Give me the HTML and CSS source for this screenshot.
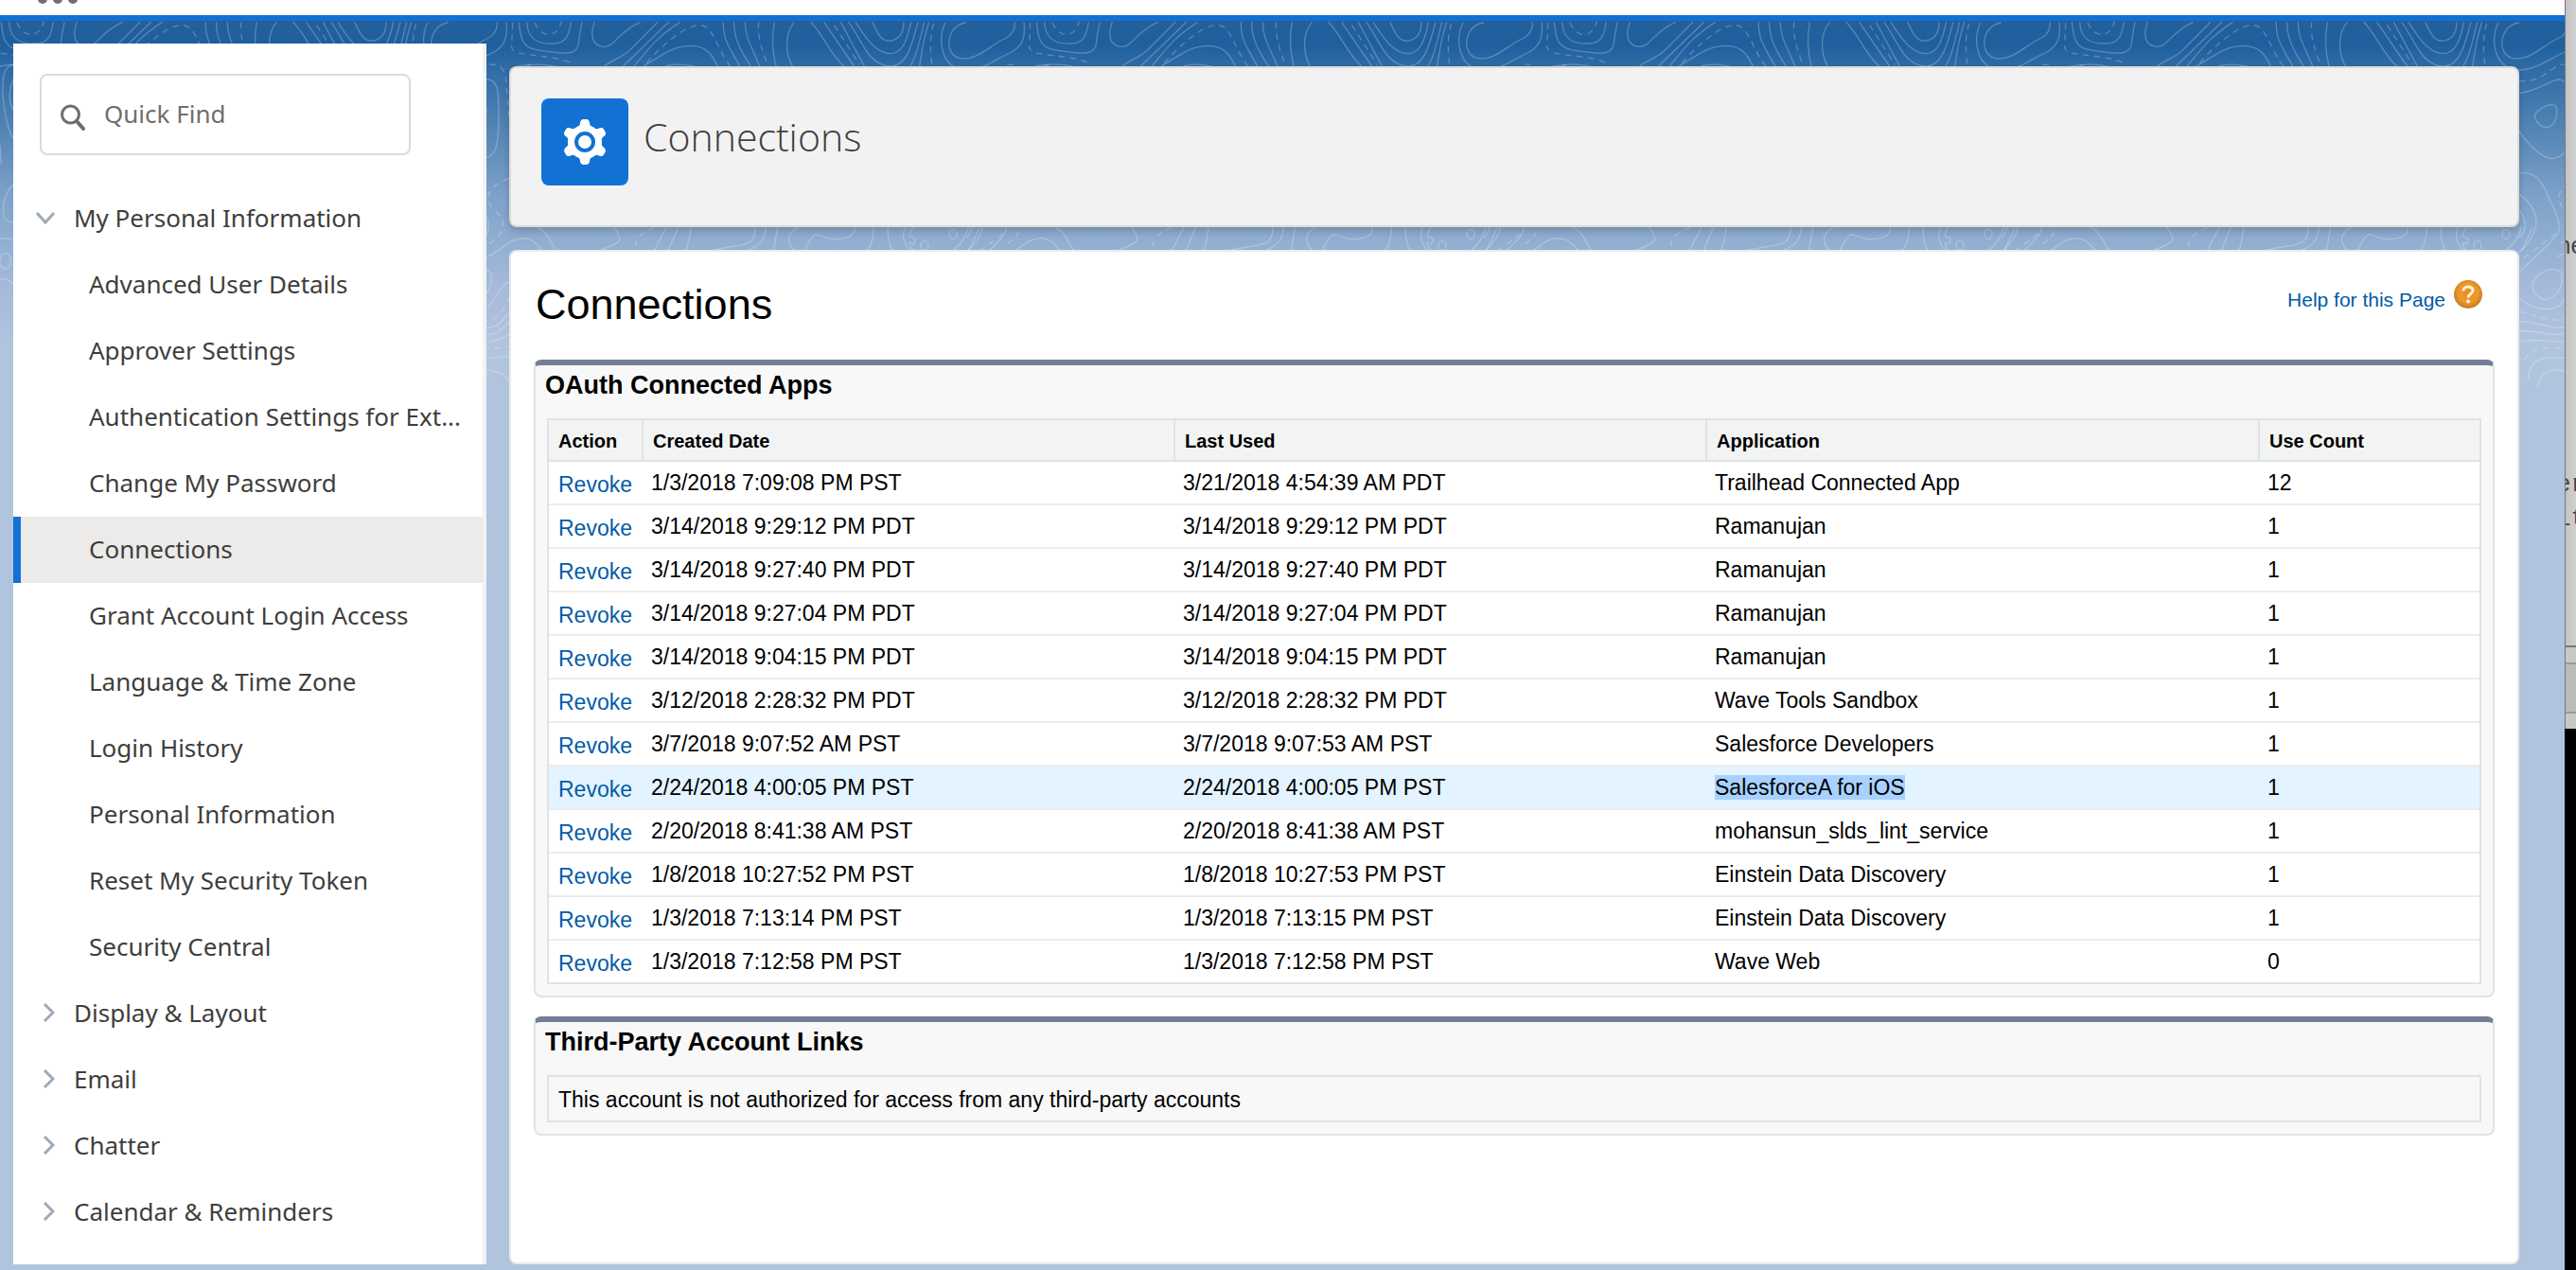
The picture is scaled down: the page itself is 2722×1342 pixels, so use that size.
FILE: index.html
```html
<!DOCTYPE html>
<html lang="en">
<head>
<meta charset="utf-8">
<title>Connections</title>
<link rel="stylesheet" href="styles.css">
</head>
<body>
<div class="window">
  <header class="topbar">
    <button class="topbar-more" type="button" aria-label="More">
      <svg width="48" height="16" viewBox="0 0 48 16"><g fill="#706e6b"><circle cx="8" cy="-1" r="5"/><circle cx="24" cy="-1" r="5"/><circle cx="40" cy="-1" r="5"/></g></svg>
    </button>
  </header>
  <div class="stage">
    <svg class="contours" aria-hidden="true">
      <defs>
        <pattern id="contour" x="500" y="-22" width="547" height="500" viewBox="0 0 1641 1500" patternUnits="userSpaceOnUse">
          <g id="tile">
            <path d="M1562 72C1500 80 1490 170 1540 184C1600 195 1640 140 1690 120C1712 108 1718 90 1717 70M1497 72C1470 120 1480 222 1567 222C1620 220 1660 185 1707 165C1740 145 1752 120 1746 70M1562 295C1620 292 1655 255 1690 252C1720 255 1722 290 1722 370C1722 470 1710 495 1680 500C1650 515 1600 470 1562 415M1612 365C1630 335 1680 320 1682 345C1685 390 1660 405 1648 404C1625 400 1612 380 1612 365ZM1562 548C1620 548 1630 570 1650 610C1680 680 1700 710 1685 740C1650 790 1580 840 1562 865M1562 615C1640 670 1630 740 1562 800M1562 665C1590 700 1585 735 1562 755M1605 900C1615 860 1680 840 1697 865C1705 910 1680 945 1650 950C1620 945 1602 925 1605 900ZM1562 945C1620 990 1660 985 1690 970C1715 950 1725 900 1760 890M1562 1020C1620 1015 1650 1045 1700 1038C1730 1030 1740 1005 1755 990M1562 1050C1620 1045 1650 1065 1700 1060C1730 1050 1740 1035 1755 1020M1562 1085C1600 1070 1650 1085 1700 1083C1730 1075 1745 1065 1755 1060M1592 1200C1595 1135 1640 1130 1700 1135L1755 1130M1620 1230C1630 1170 1670 1165 1720 1180C1740 1185 1750 1200 1755 1210"/>
            <path d="M145 70C150 120 155 150 200 158C300 175 335 175 335 130C338 100 342 90 345 70M170 70C172 120 200 140 250 138C300 140 305 100 310 70M115 220C150 200 240 200 270 215M385 70C370 110 375 145 415 148C450 148 460 100 530 70M585 70L500 155C480 180 440 190 415 210M620 70L475 210M655 70C580 120 560 150 510 210M540 210C620 160 640 145 695 145C745 148 760 180 775 210M610 210C640 200 670 205 700 210M793 70C790 130 820 160 845 210M827 70C825 120 850 165 880 210M862 70C860 120 890 160 908 210M955 70C945 120 950 170 960 210M1018 70C985 110 990 170 1012 210M1070 70C1110 110 1130 170 1175 210M1112 70L1208 210M1165 70L1240 210M1190 70C1230 120 1250 210 1325 210C1380 210 1395 120 1410 70M1212 70C1250 130 1280 170 1325 170C1370 168 1380 100 1388 70M1265 70C1280 100 1290 130 1320 130C1360 125 1365 90 1365 70M1430 70C1415 130 1405 180 1385 210M1445 70C1425 130 1420 180 1415 210"/>
            <path d="M42 815C100 790 110 755 160 755C190 758 205 775 220 795M200 718C230 730 245 765 262 795M445 718C480 770 470 765 400 795M612 720L574 795M650 720L618 795M690 720C688 750 680 775 675 795M894 720C895 790 850 770 750 795M928 720C925 770 900 780 875 792M965 720L952 795M1030 720C980 750 1005 780 1020 795M1050 795C1090 710 1090 755 1140 758C1200 760 1210 740 1210 720M1270 720C1270 760 1260 780 1250 795M1315 720C1312 750 1320 780 1330 795M1370 720C1355 750 1370 780 1385 795M1395 720C1360 780 1420 730 1395 775C1370 755 1390 795 1400 795M1570 720C1560 760 1540 780 1520 795M1605 720C1590 760 1580 775 1570 795"/>
            <path d="M184 205C150 210 148 250 150 300C155 370 170 420 184 440M184 250C170 280 165 320 184 350M141 460L145 520M184 585C155 610 145 660 155 690C165 705 175 705 184 705M141 885C160 880 170 890 184 900"/>
            <ellipse cx="1521" cy="743" rx="12" ry="15"/><ellipse cx="1431" cy="778" rx="12" ry="15"/><ellipse cx="158" cy="828" rx="18" ry="25"/>
            <path stroke-dasharray="20 16" d="M195 72C215 120 265 125 280 68M125 72L122 150C125 185 250 165 320 205M550 200C600 140 680 75 720 80C760 80 770 150 815 210M905 70C900 120 920 170 935 210M1145 80L1225 205M1460 75C1445 120 1450 170 1455 210M1562 257C1620 262 1660 225 1683 208C1721 195 1746 215 1746 270L1754 370M113 565C50 590 30 625 65 665C110 700 105 740 42 780M575 722C530 735 515 760 514 780M1679 741L1562 830M1562 988C1610 995 1650 1020 1700 1013C1730 1000 1745 960 1758 945M1580 1140C1600 1095 1650 1105 1700 1105L1755 1098"/>
          </g>
          <use href="#tile" x="-1641"/>
        </pattern>
      </defs>
      <rect width="100%" height="100%" fill="url(#contour)" stroke="none"/>
    </svg>

    <nav class="sidebar" aria-label="Setup">
      <label class="search">
        <svg width="26" height="28" viewBox="0 0 26 28" aria-hidden="true"><circle cx="10.5" cy="11" r="9" fill="none" stroke="#706e6b" stroke-width="3"/><path d="M17 18L24 26" stroke="#706e6b" stroke-width="4" stroke-linecap="round"/></svg>
        <input type="search" placeholder="Quick Find" aria-label="Quick Find">
      </label>
      <button class="node" type="button" aria-expanded="true"><svg class="chev" viewBox="0 0 20 20"><path d="M1 5L10 15L19 5"/></svg>My Personal Information</button>
      <ul class="leaves">
        <li><a href="#">Advanced User Details</a></li>
        <li><a href="#">Approver Settings</a></li>
        <li><a href="#">Authentication Settings for Ext...</a></li>
        <li><a href="#">Change My Password</a></li>
        <li><a href="#" class="current" aria-current="page">Connections</a></li>
        <li><a href="#">Grant Account Login Access</a></li>
        <li><a href="#">Language &amp; Time Zone</a></li>
        <li><a href="#">Login History</a></li>
        <li><a href="#">Personal Information</a></li>
        <li><a href="#">Reset My Security Token</a></li>
        <li><a href="#">Security Central</a></li>
      </ul>
      <button class="node" type="button" aria-expanded="false"><svg class="chev" viewBox="0 0 20 20"><path d="M9 1L18 10L9 19"/></svg>Display &amp; Layout</button>
      <button class="node" type="button" aria-expanded="false"><svg class="chev" viewBox="0 0 20 20"><path d="M9 1L18 10L9 19"/></svg>Email</button>
      <button class="node" type="button" aria-expanded="false"><svg class="chev" viewBox="0 0 20 20"><path d="M9 1L18 10L9 19"/></svg>Chatter</button>
      <button class="node" type="button" aria-expanded="false"><svg class="chev" viewBox="0 0 20 20"><path d="M9 1L18 10L9 19"/></svg>Calendar &amp; Reminders</button>
    </nav>

    <main class="main">
      <section class="page-header">
        <span class="page-icon">
          <svg width="92" height="92" viewBox="-46 -46 92 92" aria-hidden="true">
            <g fill="#fff">
              <circle r="18"/>
              <path id="tooth" d="M-8-15Q-5-17-5-21Q-4-24-2-24H2Q4-24 5-21Q5-17 8-15Z"/>
              <use href="#tooth" transform="rotate(60)"/><use href="#tooth" transform="rotate(120)"/><use href="#tooth" transform="rotate(180)"/><use href="#tooth" transform="rotate(240)"/><use href="#tooth" transform="rotate(300)"/>
            </g>
            <circle r="9" fill="none" stroke="#1272d3" stroke-width="4"/>
          </svg>
        </span>
        <h1>Connections</h1>
      </section>

      <section class="content">
        <div class="content-head">
          <h2>Connections</h2>
          <a class="help" href="#">Help for this Page
            <svg width="32" height="32" viewBox="0 0 32 32" aria-hidden="true">
              <defs><radialGradient id="amber" cx="50%" cy="45%" r="55%"><stop offset="0" stop-color="#ec8a1c"/><stop offset=".6" stop-color="#ee9a2c"/><stop offset="1" stop-color="#c07a20"/></radialGradient></defs>
              <circle cx="16" cy="16" r="15" fill="url(#amber)"/>
              <path d="M11 12.500C11 6.500 21 6.500 21 12C21 15.500 16 15.500 16 19.500" fill="none" stroke="#fff3dc" stroke-width="3"/>
              <circle cx="16" cy="23.500" r="2" fill="#fff3dc"/>
            </svg>
          </a>
        </div>

        <section class="panel">
          <h3>OAuth Connected Apps</h3>
          <table>
            <colgroup><col class="c-action"><col class="c-date"><col class="c-date"><col class="c-app"><col></colgroup>
            <thead><tr><th scope="col">Action</th><th scope="col">Created Date</th><th scope="col">Last Used</th><th scope="col">Application</th><th scope="col">Use Count</th></tr></thead>
            <tbody>
              <tr><td><a href="#">Revoke</a></td><td>1/3/2018 7:09:08 PM PST</td><td>3/21/2018 4:54:39 AM PDT</td><td>Trailhead Connected App</td><td>12</td></tr>
              <tr><td><a href="#">Revoke</a></td><td>3/14/2018 9:29:12 PM PDT</td><td>3/14/2018 9:29:12 PM PDT</td><td>Ramanujan</td><td>1</td></tr>
              <tr><td><a href="#">Revoke</a></td><td>3/14/2018 9:27:40 PM PDT</td><td>3/14/2018 9:27:40 PM PDT</td><td>Ramanujan</td><td>1</td></tr>
              <tr><td><a href="#">Revoke</a></td><td>3/14/2018 9:27:04 PM PDT</td><td>3/14/2018 9:27:04 PM PDT</td><td>Ramanujan</td><td>1</td></tr>
              <tr><td><a href="#">Revoke</a></td><td>3/14/2018 9:04:15 PM PDT</td><td>3/14/2018 9:04:15 PM PDT</td><td>Ramanujan</td><td>1</td></tr>
              <tr><td><a href="#">Revoke</a></td><td>3/12/2018 2:28:32 PM PDT</td><td>3/12/2018 2:28:32 PM PDT</td><td>Wave Tools Sandbox</td><td>1</td></tr>
              <tr><td><a href="#">Revoke</a></td><td>3/7/2018 9:07:52 AM PST</td><td>3/7/2018 9:07:53 AM PST</td><td>Salesforce Developers</td><td>1</td></tr>
              <tr class="hovered"><td><a href="#">Revoke</a></td><td>2/24/2018 4:00:05 PM PST</td><td>2/24/2018 4:00:05 PM PST</td><td><span class="selected">SalesforceA for iOS</span></td><td>1</td></tr>
              <tr><td><a href="#">Revoke</a></td><td>2/20/2018 8:41:38 AM PST</td><td>2/20/2018 8:41:38 AM PST</td><td>mohansun_slds_lint_service</td><td>1</td></tr>
              <tr><td><a href="#">Revoke</a></td><td>1/8/2018 10:27:52 PM PST</td><td>1/8/2018 10:27:53 PM PST</td><td>Einstein Data Discovery</td><td>1</td></tr>
              <tr><td><a href="#">Revoke</a></td><td>1/3/2018 7:13:14 PM PST</td><td>1/3/2018 7:13:15 PM PST</td><td>Einstein Data Discovery</td><td>1</td></tr>
              <tr><td><a href="#">Revoke</a></td><td>1/3/2018 7:12:58 PM PST</td><td>1/3/2018 7:12:58 PM PST</td><td>Wave Web</td><td>0</td></tr>
            </tbody>
          </table>
        </section>

        <section class="panel">
          <h3>Third-Party Account Links</h3>
          <p class="empty">This account is not authorized for access from any third-party accounts</p>
        </section>
      </section>
    </main>
  </div>
</div>
<aside class="behind">
  <div class="behind-page"><span class="behind-sans">ne</span><span class="behind-mono">er</span><span class="behind-mono">it</span></div>
  <div class="behind-bar"></div>
</aside>
</body>
</html>
```
FILE: styles.css
```css
* { box-sizing: border-box; }
body {
  margin: 0;
  min-height: 100vh;
  display: grid;
  grid-template-columns: minmax(0, 1fr) 12px;
  background: #000;
  font-family: "Liberation Sans", Arial, sans-serif;
  color: #000;
}
h1, h2, h3, p, ul { margin: 0; padding: 0; }
a { color: #015ba7; text-decoration: none; }
button { border: 0; background: none; padding: 0; font: inherit; color: inherit; }

.window { display: flex; flex-direction: column; background: #b0c4de; }
.topbar {
  height: 22px;
  padding-left: 37px;
  background: #fff;
  border-bottom: 6px solid #1272d3;
}
.topbar-more { display: block; height: 16px; }
.topbar-more svg { display: block; }

.stage {
  position: relative;
  flex: 1;
  display: grid;
  grid-template-columns: 500px minmax(0, 1fr);
  gap: 24px;
  padding: 24px 48px 6px 14px;
  background: linear-gradient(#235f9b 0, #1f5f9f 26px, #2c69a5 44px, #3f77ad 80px, #5c8bb9 130px, #7ba0c8 180px, #93b0d3 240px, #a6b9da 280px, #b0c4de 340px);
}
.contours {
  position: absolute;
  top: 0;
  left: 0;
  width: 100%;
  height: 400px;
  fill: none;
  stroke: #fff;
  stroke-opacity: .24;
  stroke-width: 4;
}
.sidebar, .main { position: relative; }

.sidebar {
  background: #fff;
  border-right: 4px solid #f2f2f2;
  font-family: "Noto Sans", sans-serif;
  font-size: 26px;
  line-height: 36px;
  color: #3e3e3c;
}
.search {
  display: flex;
  align-items: center;
  gap: 20px;
  width: 392px;
  height: 86px;
  margin: 32px 28px;
  padding: 0 0 2px 20px;
  border: 2px solid #dddbda;
  border-radius: 8px;
}
.search svg { margin-top: 8px; }
.search input {
  flex: 1;
  min-width: 0;
  padding: 0;
  border: 0;
  outline: 0;
  background: none;
  font: inherit;
}
.search input::placeholder { color: #706e6b; opacity: 1; }
.node {
  display: flex;
  align-items: center;
  gap: 20px;
  width: 100%;
  height: 70px;
  padding: 0 0 2px 24px;
  text-align: left;
}
.chev { width: 20px; height: 20px; fill: none; stroke: #9faab5; stroke-width: 3; }
.leaves { list-style: none; }
.leaves a {
  display: block;
  padding: 16px 16px 18px 80px;
  color: inherit;
  white-space: nowrap;
  overflow: hidden;
  text-overflow: ellipsis;
}
.leaves a.current { background: #ecebea; box-shadow: inset 8px 0 #1272d3; }

.main { display: flex; flex-direction: column; gap: 24px; padding-top: 24px; }
.page-header {
  display: flex;
  gap: 16px;
  height: 170px;
  padding: 32px;
  background: #f2f2f2;
  border: 2px solid #dddbda;
  border-radius: 8px;
  box-shadow: 0 4px 8px rgba(0, 0, 0, .18);
}
.page-icon { width: 92px; height: 92px; border-radius: 8px; background: #1272d3; }
.page-icon svg { display: block; }
h1 {
  font-family: "Open Sans", "Noto Sans", sans-serif;
  font-weight: 300;
  font-size: 41px;
  line-height: 80px;
  color: #3e3e3c;
}
.content {
  flex: 1;
  display: flex;
  flex-direction: column;
  gap: 20px;
  padding: 24px;
  background: #fff;
  border: 2px solid #ebe9e8;
  border-radius: 8px;
}
.content-head { display: flex; justify-content: space-between; height: 70px; padding: 0 12px 0 2px; }
h2 { font-weight: 400; font-size: 45px; line-height: 64px; }
.help { display: flex; gap: 8px; font-size: 21px; line-height: 54px; }
.help svg { margin-top: 5px; }

.panel {
  padding: 6px 12px 12px;
  background: #f8f8f8;
  border: 2px solid #e0e3e5;
  border-top: 6px solid #747e96;
  border-radius: 8px;
}
h3 { margin: 0 0 20px -2px; font-size: 27px; line-height: 30px; }
table {
  width: 100%;
  table-layout: fixed;
  border-collapse: separate;
  border-spacing: 0;
  background: #fff;
  border: 2px solid #e0e3e5;
  border-bottom: 0;
  font-size: 23px;
}
th, td { padding: 0 10px; text-align: left; white-space: nowrap; }
th {
  height: 44px;
  padding-top: 2px;
  background: #f2f3f3;
  border-bottom: 2px solid #e0e3e5;
  font-size: 20px;
}
th + th { border-left: 2px solid #e0e3e5; }
td { height: 46px; border-bottom: 2px solid #ececec; line-height: 26px; }
td:first-child { padding: 4px 0 0 10px; }
.hovered td { background: #e3f3ff; }
.selected { background: #a8d1ff; }
tbody tr:last-child td { border-bottom-color: #e0e3e5; }
.c-action { width: 98px; }
.c-date { width: 562px; }
.c-app { width: 584px; }
.empty { padding: 11px 10px 9px; border: 2px solid #e0e3e5; font-size: 23px; line-height: 26px; }

.behind { overflow: hidden; border-left: 1px solid #777; align-self: start; }
.behind-page {
  display: flex;
  flex-direction: column;
  align-items: center;
  height: 682px;
  padding-top: 244px;
  background: linear-gradient(90deg, #c4c4c4, #d0d0d0);
  color: #444;
}
.behind-sans { font-size: 25px; line-height: 30px; margin-bottom: 220px; }
.behind-mono { font: 26px/36px "Liberation Mono", monospace; }
.behind-bar {
  height: 88px;
  background: linear-gradient(#777 0 2px, #c8c8c8 2px 18px, #999 18px 20px, #bbb 20px 70px, #999 70px 72px, #c8c8c8 72px);
}
```
